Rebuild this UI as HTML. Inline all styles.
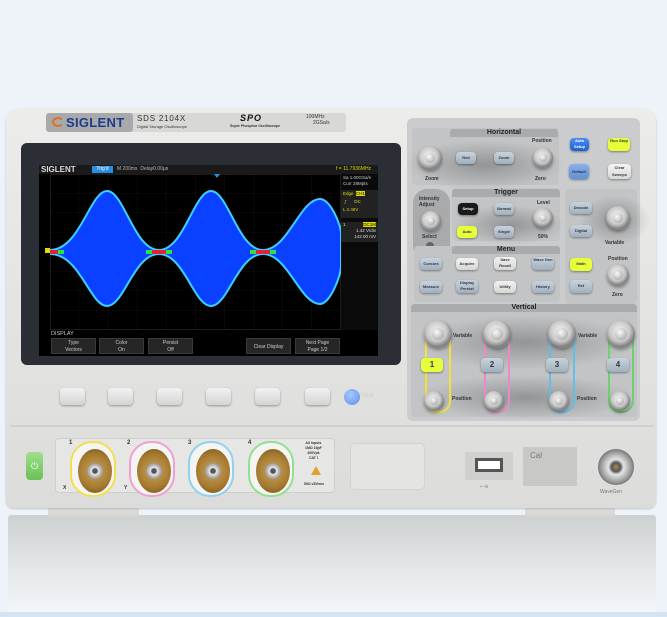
<!DOCTYPE html><html><head><style>
*{margin:0;padding:0;box-sizing:border-box}
body{width:667px;height:617px;overflow:hidden;background:#eef3fa;font-family:"Liberation Sans",sans-serif;position:relative}
.a{position:absolute}
.knob{position:absolute;border-radius:50%;background:radial-gradient(circle at 45% 40%,#f4f4f4 0,#c8c8c8 45%,#7a7a7a 70%,#d8d8d8 85%,#9a9a9a 100%);box-shadow:0 2px 3px rgba(0,0,0,.35)}
.knob:after{content:"";position:absolute;left:28%;top:28%;width:44%;height:44%;border-radius:50%;background:radial-gradient(circle at 40% 35%,#fafafa,#b5b5b5 70%,#888);}
.btn{position:absolute;border-radius:4px;background:linear-gradient(#c8d3dc,#9fb0bd);box-shadow:0 1px 2px rgba(0,0,0,.4);font-size:4px;color:#334;text-align:center;line-height:12px;font-weight:bold}
.sec{position:absolute;background:#c2c4c6;border-radius:4px}
.hd{position:absolute;background:#a9abad;font-size:7px;font-weight:bold;color:#222;text-align:center;line-height:8px;border-radius:3px 3px 0 0}
.sk{position:absolute;top:388px;width:25px;height:17px;border-radius:4px;background:linear-gradient(#f2f2f2,#d4d4d4);box-shadow:0 1px 2px rgba(0,0,0,.35)}
.soft{position:absolute;top:338px;height:16px;background:#262626;border:1px solid #3a3a3a;color:#ccc;font-size:5px;text-align:center;line-height:7px;padding-top:1px}
.bnc{position:absolute;width:46px;height:56px;border-radius:22px;background:#f4f4f2;top:441px}
.brass{position:absolute;left:6px;top:6px;width:34px;height:44px;border-radius:50%;background:radial-gradient(circle,#c9a35a 0,#a57a30 60%,#6d4c1a 100%)}
.brass:after{content:"";position:absolute;left:9px;top:14px;width:16px;height:16px;border-radius:50%;background:radial-gradient(circle,#555 0,#555 20%,#e8e8e8 30%,#aaa 60%,#666 100%)}
.t{position:absolute;font-size:5px;color:#333;font-weight:bold}
.sh{position:absolute;border-radius:50%;background:radial-gradient(closest-side,rgba(60,60,60,.35),rgba(60,60,60,0))}
</style></head><body>
<div class="a" style="left:8px;top:515px;width:648px;height:97px;background:linear-gradient(#cdd0d0,#e2e5e7 50%,#f3f6fa);border-radius:3px"></div>
<div class="a" style="left:0;top:612px;width:667px;height:5px;background:#d6e3f3"></div>
<div class="a" style="left:48px;top:503px;width:91px;height:17px;background:linear-gradient(#e8e8e6,#cfcfcd);border-radius:0 0 3px 3px"></div>
<div class="a" style="left:525px;top:503px;width:90px;height:17px;background:linear-gradient(#e8e8e6,#cfcfcd);border-radius:0 0 3px 3px"></div>
<div class="a" style="left:6px;top:108px;width:650px;height:400px;background:linear-gradient(#ececea,#e2e2e0 60%,#dcdcda);border-radius:14px 14px 8px 8px;box-shadow:0 1px 2px rgba(0,0,0,.2)"></div>
<div class="a" style="left:10px;top:425px;width:644px;height:2px;background:#d0d0ce"></div>
<div class="a" style="left:46px;top:113px;width:300px;height:19px;background:#d8d8d6;border-radius:3px"></div>
<div class="a" style="left:46px;top:113px;width:87px;height:19px;background:#a8a9ab;border-radius:3px;color:#1c3c8c;font-weight:bold;font-size:13px;line-height:19px;padding-left:20px;letter-spacing:.3px">SIGLENT</div>
<div class="a" style="left:52px;top:117px;width:12px;height:10px;border:2px solid #e07020;border-radius:50%;border-right-color:transparent"></div>
<div class="t" style="left:137px;top:114px;font-size:8px;font-weight:normal;letter-spacing:.8px">SDS 2104X</div>
<div class="t" style="left:137px;top:124px;font-size:4px;font-weight:normal">Digital Storage Oscilloscope</div>
<div class="t" style="left:240px;top:113px;font-size:9px;font-style:italic;letter-spacing:1px;color:#111">SPO</div>
<div class="t" style="left:230px;top:124px;font-size:3.5px">Super Phosphor Oscilloscope</div>
<div class="t" style="left:306px;top:114px;font-size:5px;font-weight:normal">100MHz</div>
<div class="t" style="left:313px;top:120px;font-size:5px;font-weight:normal">2GSa/s</div>
<div class="a" style="left:21px;top:143px;width:380px;height:222px;background:#2c2e35;border-radius:6px"></div>
<div class="a" style="left:39px;top:165px;width:339px;height:191px;background:#000"></div>
<div class="a" style="left:39px;top:165px;width:339px;height:9px;background:#1a1a1a"></div>
<div class="a" style="left:41px;top:165px;color:#ddd;font-size:8px;font-weight:bold;line-height:9px">SIGLENT</div>
<div class="a" style="left:92px;top:166px;width:21px;height:7px;background:#2a8ee0;color:#fff;font-size:5px;line-height:7px;text-align:center">Trig'd</div>
<div class="a" style="left:117px;top:166px;color:#bbb;font-size:5px">M 200ms&nbsp;&nbsp;Delay0.00μs</div>
<div class="a" style="left:336px;top:166px;color:#dd0;font-size:5px">f = 11.7936MHz</div>
<svg class="a" style="left:50px;top:174px" width="291" height="156" viewBox="0 0 291 156">
<defs><pattern id="g" width="29.1" height="19.5" patternUnits="userSpaceOnUse"><path d="M29.1 0V19.5M0 19.5H29.1" stroke="#333" stroke-width=".6" fill="none" stroke-dasharray="1 1"/></pattern></defs>
<rect width="291" height="156" fill="url(#g)" stroke="#444" stroke-width=".8"/>
<path d="M0 76 C30 76 40 17 57 17 C74 17 84 76 109 76 C134 76 144 17 161 17 C178 17 188 76 213 76 C238 76 250 25 270 25 C280 25 291 50 291 60 L291 92 C291 102 280 130 270 130 C250 130 238 80 213 80 C188 80 178 132 161 132 C144 132 134 80 109 80 C84 80 74 132 57 132 C40 132 30 80 0 80Z" fill="#0a40ff" stroke="#3cd0ff" stroke-width="2"/>
<g fill="none" stroke-width="4"><path d="M8 78h6M96 78h6M116 78h6M200 78h6M220 78h6" stroke="#30e040"/><path d="M0 78H8M102 78h14M206 78h14" stroke="#e02040"/></g>
</svg>
<div class="a" style="left:214px;top:174px;width:0;height:0;border:3px solid transparent;border-top:4px solid #2a8ee0"></div>
<div class="a" style="left:45px;top:248px;width:5px;height:5px;background:#dd0"></div>
<div class="a" style="left:341px;top:174px;width:37px;height:156px;background:#0a0a0a"></div>
<div class="a" style="left:343px;top:175px;color:#ccc;font-size:4.5px;line-height:6px">Sa 1.00GSa/s<br>Curr 28Mpts</div>
<div class="a" style="left:341px;top:190px;width:37px;height:28px;background:#222;color:#dd0;font-size:4.5px;line-height:8px;padding-left:2px">Edge&nbsp;&nbsp;<span style="background:#dd0;color:#000">CH1</span><br>&nbsp;ƒ&nbsp;&nbsp;&nbsp;&nbsp;&nbsp;&nbsp;DC<br>L 2.46V</div>
<div class="a" style="left:341px;top:222px;width:37px;height:20px;background:#222;color:#ddd;font-size:4.5px;line-height:6px;text-align:right;padding-right:2px"><span style="float:left;padding-left:2px">1</span><span style="background:#dd0;color:#000">DC1M</span><br>1.42 V/div<br>142.00 mV</div>
<div class="a" style="left:51px;top:331px;color:#ccc;font-size:5.5px">DISPLAY</div>
<div class="soft" style="left:51px;width:45px">Type<br>Vectors</div>
<div class="soft" style="left:99px;width:45px">Color<br>On</div>
<div class="soft" style="left:148px;width:45px">Persist<br>Off</div>
<div class="soft" style="left:246px;width:45px;line-height:14px">Clear Display</div>
<div class="soft" style="left:295px;width:45px">Next Page<br>Page 1/2</div>
<div class="sk" style="left:60px"></div><div class="sk" style="left:108px"></div><div class="sk" style="left:157px"></div><div class="sk" style="left:206px"></div><div class="sk" style="left:255px"></div><div class="sk" style="left:305px"></div>
<div class="a" style="left:344px;top:389px;width:16px;height:16px;border-radius:50%;background:radial-gradient(circle at 40% 35%,#a8c8ff,#5b8ee8)"></div>
<div class="a" style="left:361px;top:393px;color:#ccc;font-size:6px">Print</div>
<div class="a" style="left:407px;top:118px;width:233px;height:303px;background:#cbcccd;border-radius:6px"></div>
<div class="sec" style="left:412px;top:128px;width:147px;height:57px"></div><div class="hd" style="left:450px;top:129px;width:108px">Horizontal</div>
<div class="sh" style="left:405px;top:140px;width:160px;height:50px"></div>
<div class="knob" style="left:418px;top:146px;width:24px;height:24px"></div>
<div class="btn" style="left:456px;top:152px;width:20px;height:12px">Roll</div>
<div class="btn" style="left:494px;top:152px;width:20px;height:12px">Zoom</div>
<div class="knob" style="left:533px;top:148px;width:20px;height:20px"></div>
<div class="t" style="left:425px;top:176px">Zoom</div><div class="t" style="left:535px;top:176px">Zero</div><div class="t" style="left:532px;top:138px">Position</div>
<div class="btn" style="left:570px;top:138px;width:19px;height:13px;background:linear-gradient(#4f8ef0,#2060d0);color:#fff;line-height:6px">Auto Setup</div>
<div class="btn" style="left:608px;top:138px;width:22px;height:13px;background:#e6ff3a;line-height:6px">Run Stop</div>
<div class="btn" style="left:569px;top:164px;width:20px;height:15px;background:linear-gradient(#8ab0e8,#6090d8);line-height:15px">Default</div>
<div class="btn" style="left:608px;top:164px;width:23px;height:15px;background:linear-gradient(#f4f4f2,#d8d8d6);line-height:7px">Clear Sweeps</div>
<div class="sec" style="left:413px;top:189px;width:37px;height:63px;background:#a8aaac;border-radius:14px 14px 4px 4px"></div>
<div class="t" style="left:419px;top:196px">Intensity<br>Adjust</div>
<div class="knob" style="left:421px;top:211px;width:20px;height:20px"></div>
<div class="t" style="left:422px;top:234px">Select</div>
<div class="a" style="left:426px;top:242px;width:8px;height:8px;border-radius:50%;background:#666"></div>
<div class="sec" style="left:452px;top:188px;width:108px;height:53px"></div><div class="hd" style="left:452px;top:189px;width:108px">Trigger</div>
<div class="sh" style="left:455px;top:205px;width:110px;height:40px"></div>
<div class="btn" style="left:458px;top:203px;width:20px;height:12px;background:#1a1a1a;color:#fff">Setup</div>
<div class="btn" style="left:494px;top:203px;width:20px;height:12px">Normal</div>
<div class="btn" style="left:457px;top:226px;width:20px;height:12px;background:#e6ff3a">Auto</div>
<div class="btn" style="left:494px;top:226px;width:20px;height:12px">Single</div>
<div class="knob" style="left:533px;top:208px;width:20px;height:20px"></div>
<div class="t" style="left:537px;top:200px">Level</div><div class="t" style="left:538px;top:234px">50%</div>
<div class="sec" style="left:414px;top:246px;width:146px;height:56px"></div><div class="hd" style="left:452px;top:246px;width:108px">Menu</div>
<div class="btn" style="left:420px;top:258px;width:22px;height:12px">Cursors</div>
<div class="btn" style="left:456px;top:258px;width:22px;height:12px;background:linear-gradient(#f2f2f0,#d6d6d4)">Acquire</div>
<div class="btn" style="left:494px;top:257px;width:22px;height:13px;background:linear-gradient(#f2f2f0,#d6d6d4);line-height:6px">Save Recall</div>
<div class="btn" style="left:532px;top:257px;width:22px;height:13px;line-height:6px">Wave Gen</div>
<div class="btn" style="left:420px;top:281px;width:22px;height:12px">Measure</div>
<div class="btn" style="left:456px;top:280px;width:22px;height:13px;line-height:6px">Display Persist</div>
<div class="btn" style="left:494px;top:281px;width:22px;height:12px;background:linear-gradient(#f2f2f0,#d6d6d4)">Utility</div>
<div class="btn" style="left:532px;top:281px;width:22px;height:12px">History</div>
<div class="sec" style="left:565px;top:189px;width:72px;height:115px"></div>
<div class="sh" style="left:580px;top:195px;width:70px;height:50px"></div>
<div class="btn" style="left:570px;top:202px;width:22px;height:12px">Decode</div>
<div class="btn" style="left:570px;top:225px;width:22px;height:12px">Digital</div>
<div class="knob" style="left:606px;top:206px;width:24px;height:24px"></div>
<div class="t" style="left:605px;top:240px">Variable</div>
<div class="btn" style="left:570px;top:258px;width:22px;height:13px;background:#e6ff3a">Math</div>
<div class="btn" style="left:570px;top:280px;width:22px;height:13px">Ref</div>
<div class="t" style="left:608px;top:256px">Position</div>
<div class="knob" style="left:607px;top:264px;width:22px;height:22px"></div>
<div class="t" style="left:612px;top:292px">Zero</div>
<div class="sec" style="left:411px;top:304px;width:226px;height:113px"></div><div class="hd" style="left:411px;top:304px;width:226px">Vertical</div>
<div class="sh" style="left:415px;top:315px;width:220px;height:55px"></div>
<div class="sh" style="left:415px;top:375px;width:220px;height:45px"></div>
<div class="a" style="left:425px;top:323px;width:26px;height:90px;border-radius:12px;border:2px solid #f0e040"></div>
<div class="a" style="left:484px;top:323px;width:26px;height:90px;border-radius:12px;border:2px solid #ea8ac8"></div>
<div class="a" style="left:549px;top:323px;width:26px;height:90px;border-radius:12px;border:2px solid #60c0ea"></div>
<div class="a" style="left:608px;top:323px;width:26px;height:90px;border-radius:12px;border:2px solid #70d070"></div>
<div class="knob" style="left:424px;top:320px;width:28px;height:28px"></div>
<div class="knob" style="left:483px;top:320px;width:28px;height:28px"></div>
<div class="knob" style="left:548px;top:320px;width:28px;height:28px"></div>
<div class="knob" style="left:607px;top:320px;width:28px;height:28px"></div>
<div class="btn" style="left:421px;top:358px;width:22px;height:14px;background:#e6ff3a;font-size:8px;line-height:14px">1</div>
<div class="btn" style="left:481px;top:358px;width:22px;height:14px;font-size:8px;line-height:14px">2</div>
<div class="btn" style="left:546px;top:358px;width:22px;height:14px;font-size:8px;line-height:14px">3</div>
<div class="btn" style="left:607px;top:358px;width:22px;height:14px;font-size:8px;line-height:14px">4</div>
<div class="knob" style="left:424px;top:391px;width:20px;height:20px"></div>
<div class="knob" style="left:484px;top:391px;width:20px;height:20px"></div>
<div class="knob" style="left:549px;top:391px;width:20px;height:20px"></div>
<div class="knob" style="left:610px;top:391px;width:20px;height:20px"></div>
<div class="t" style="left:453px;top:333px">Variable</div><div class="t" style="left:578px;top:333px">Variable</div>
<div class="t" style="left:452px;top:396px">Position</div><div class="t" style="left:577px;top:396px">Position</div>
<div class="a" style="left:26px;top:452px;width:17px;height:28px;border-radius:4px;background:linear-gradient(#9ee08a,#6cc05a);color:#fff;font-size:9px;text-align:center;line-height:28px">⏻</div>
<div class="a" style="left:55px;top:438px;width:280px;height:55px;border:1px solid #cfcfcd;border-radius:4px;background:#e6e6e4"></div>
<div class="bnc" style="left:70px;border:2px solid #f0e050"><div class="brass"></div></div>
<div class="bnc" style="left:129px;border:2px solid #f0a0d0"><div class="brass"></div></div>
<div class="bnc" style="left:188px;border:2px solid #90d0f0"><div class="brass"></div></div>
<div class="bnc" style="left:248px;border:2px solid #90e090"><div class="brass"></div></div>
<div class="t" style="left:69px;top:440px;font-size:6px">1</div><div class="t" style="left:127px;top:440px;font-size:6px">2</div><div class="t" style="left:188px;top:440px;font-size:6px">3</div><div class="t" style="left:248px;top:440px;font-size:6px">4</div>
<div class="t" style="left:63px;top:485px;font-size:5px">X</div><div class="t" style="left:124px;top:485px;font-size:5px">Y</div>
<div class="t" style="left:305px;top:441px;font-size:3.5px;text-align:center;line-height:5px">All Inputs<br>1MΩ 16pF<br>400Vpk<br>CAT I</div>
<div class="a" style="left:311px;top:466px;width:0;height:0;border:5px solid transparent;border-bottom:9px solid #e0a030;border-top:0"></div>
<div class="t" style="left:304px;top:482px;font-size:3.5px">50Ω ≤5Vrms</div>
<div class="a" style="left:350px;top:443px;width:75px;height:47px;border:1px solid #d2d2d0;border-radius:5px;background:#e4e4e2"></div>
<div class="a" style="left:465px;top:452px;width:48px;height:28px;background:#d0d0ce"></div>
<div class="a" style="left:475px;top:458px;width:28px;height:14px;background:#fff;border:3px solid #555"></div>
<div class="t" style="left:480px;top:484px;font-weight:normal;color:#888">⇠⊖</div>
<div class="a" style="left:523px;top:447px;width:54px;height:39px;background:#c8c8c6"></div>
<div class="t" style="left:530px;top:451px;font-size:8px;font-weight:normal;color:#777">Cal</div>
<div class="a" style="left:598px;top:449px;width:36px;height:36px;border-radius:50%;background:radial-gradient(circle,#b08850 0,#555 18%,#e6e6e6 30%,#999 60%,#555 80%,#ccc 100%)"></div>
<div class="t" style="left:600px;top:489px;font-weight:normal;color:#777">WaveGen</div>
</body></html>
